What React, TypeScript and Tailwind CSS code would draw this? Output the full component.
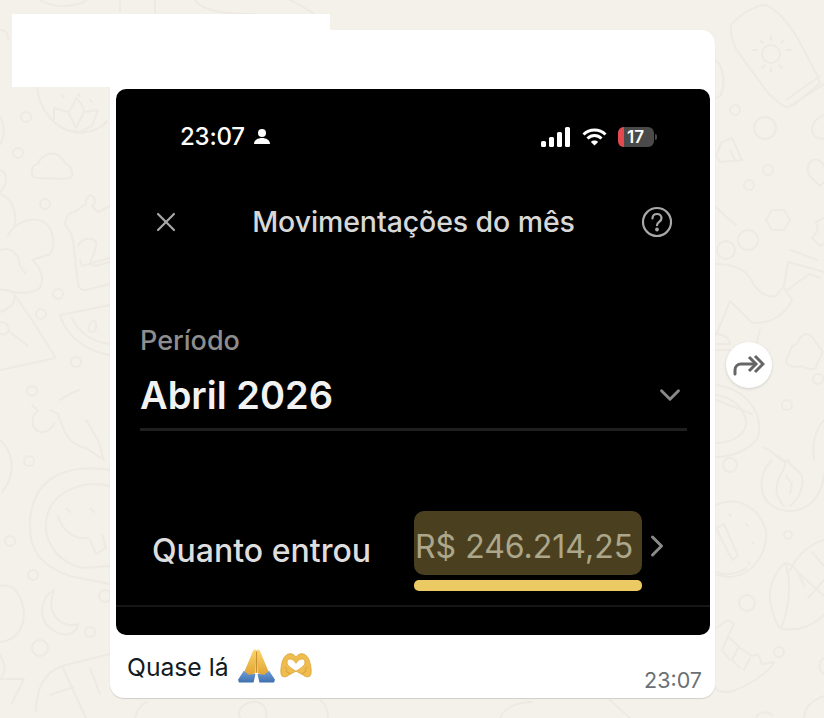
import { ChevronDown, ChevronRight, X } from "lucide-react";

const sans = "font-['Inter','Liberation_Sans',sans-serif]";

// ─── Wallpaper doodles ───────────────────────────────────────────────────────

function Doodles() {
  return (
    <svg className="absolute inset-0" width="824" height="718" viewBox="0 0 824 718" fill="none" stroke="#eeeae3" strokeWidth="2" strokeLinecap="round" strokeLinejoin="round">
      {/* sunscreen bottle, top right */}
      <path d="M731 25c8-10 22-18 32-20 10 0 24 16 34 32l20 38 3 8-26 22-8 2c-6-2-12-8-18-14L738 52c-5-8-8-18-7-27z" />
      <path d="M786 100l34-24M790 106l34-22" />
      <circle cx="771" cy="54" r="9" />
      <path d="M771 36v4M786 50h5M752 50h5M760 40l3 3M784 40l-3 3M762 68l3-3M782 68l-3-3M771 68v4" />
      <circle cx="765" cy="128" r="11" />
      <circle cx="735" cy="110" r="5" />
      <circle cx="768" cy="170" r="5" />
      <circle cx="749" cy="185" r="5" />
      <path d="M716 60c8 8 10 26 4 36l-4 2M722 142l-6 14 4 6 22-2-10-22zM730 150l6 12" />
      <path d="M824 115c-6 2-12 8-12 14 0 8 6 10 12 10M812 160c-6 6-6 14 0 18l8 8 4-4M812 160c6-2 10 2 12 6" />
      {/* hexagon, flower, sock, puzzle */}
      <path d="M772 210h12l6 10-6 10h-12l-6-10z" />
      <path d="M824 218l-8 4 2 8-6 8 8 8 4-2" />
      <circle cx="748" cy="240" r="10" />
      <circle cx="726" cy="250" r="9" />
      <path d="M736 225l-10-8-10-10M716 264c14 0 28 4 34 14 6 12 14 20 26 18l8-10 4-24 22 6 14 4M790 250l28 10" />
      <path d="M788 290l10-8 12-8 10 4M784 288l8 12M716 335l14-34 22 22c20 0 30-6 40-22M716 334c8 0 14 4 14 10l-14 0M760 330l-6 22M716 350h14" />
      <path d="M792 346c8 0 6-12 14-12s10 12 16 16c2 8-6 10-6 18-6 4-12-2-16-2-6 2-12 0-14-4 0-6 4-8 6-16z" />
      <circle cx="787" cy="405" r="5" />
      <circle cx="818" cy="379" r="5" />
      <path d="M716 385c30 4 48 28 42 52-4 8-20 20-42 20M716 395c18 2 30 16 30 28 0 10-12 20-30 20M716 400l36 14" />
      <path d="M824 420c-10 12-12 24-10 40M764 448c10 2 16 14 22 14l-8-6" />
      {/* fire, cookie, corn, hand */}
      <circle cx="730" cy="465" r="7" />
      <path d="M772 460c-14 14-14 36 0 46 14 8 30 6 40-4 8-8 12-20 12-28M784 506c-8-8-10-20-4-30 6-8 4-14 8-16 2 8 8 6 14 16 2 10-2 22-12 30M786 476l6 8-2 10" />
      <path d="M716 505c24-10 44 4 50 26 2 20-12 44-36 46l-14-2M716 572c10 4 22 2 30-4" />
      <path d="M716 528l8-4 14 32-6 4zM729 514l2 2M746 524l2 2M752 542l2 2M748 562l2 2" />
      <circle cx="788" cy="535" r="4" />
      <path d="M785 563c-12 10-18 28-14 42 2 10 6 20 10 24 18 2 30-2 43-14M785 563c6 14 6 40-4 66M786 563c8 2 14 10 18 24M824 540c-14 4-26 14-34 30M800 574l24 22M812 552l12 14M808 598l16-18" />
      <circle cx="747" cy="603" r="8" />
      <path d="M716 628l12-8 6 4-6 12 12 12 12 8 6-2 4 10 12-2c-4 10-26 24-44 30-6 0-14 0-14-4M728 636l-6 14 8 10M738 648l-6 12 8 8M750 658l-6 12" />
      <circle cx="779" cy="652" r="5" />
      <path d="M824 658c-6 4-6 12 0 16M804 718c0-10 8-18 20-22M756 718c2-6 12-8 16-2" />
      {/* lotus */}
      <path d="M37 86c2 24 18 44 40 47 12 0 24-4 30-12" />
      <path d="M54 108l14 4c4-4 8-12 8-14 4 4 8 8 8 14l14-2-6 16-12 6-14-2-12-8zM68 112l8 16 8-16" />
      <path d="M62 95l2 2M78 94l2 2M90 100l2 2" />
      <circle cx="26" cy="117" r="5" />
      <circle cx="18" cy="153" r="5" />
      {/* cloud, tree, triangle */}
      <path d="M36 178c-6 0-6-14 2-14 2-8 12-12 18-10 6 2 8 8 10 10 6 2 8 12 4 14-8 2-26 0-34 0z" />
      <path d="M0 117c6 8 4 24-2 30M0 170c8 2 8 14 0 22M0 194c12 4 18 18 14 34" />
      <circle cx="45" cy="204" r="5" />
      <path d="M8 236c6-14 24-20 36-14 10 6 12 24 6 32l-18 6c10 8 12 20 8 28-8 6-24 6-34 2l-24-2M0 250c12-4 20 6 20 16l6 8" />
      <path d="M14 294c2 8-2 14-14 18M14 294l18 26 24 38-56 12M0 322c6 0 10 4 8 10-4 4-8 2-8 2M10 332l18 14" />
      <circle cx="58" cy="294" r="5" />
      <circle cx="41" cy="314" r="5" />
      <circle cx="76" cy="362" r="5" />
      <circle cx="32" cy="391" r="5" />
      {/* cake */}
      <path d="M72 212c-6 4-8 10-6 14 6 6 8 14 8 24l4 34c2 6 4 6 8 6l24-6M74 212l6-4 6-4c-2-6 4-10 6-8 4 2 4 8 0 10l6 6 12-6" />
      <path d="M78 246c4-8 14-10 18-4 2 6-4 14-6 22 4 4 12 0 20-2M80 260l2 6 28-8" />
      {/* watermelon */}
      <path d="M60 315l50-10M60 315c6 20 24 36 50 40M72 318c6 14 20 24 38 26" />
      <path d="M94 320c-6 4-8 12-2 12 4 0 6-6 2-12z" />
      {/* chilli + smiley column */}
      <path d="M50 410l8 4 6 16c6 12 12 16 22 18l18 12-6-20-12-20M32 405l6 6c-6 4-8 16 0 20 6 4 14-2 16-8M60 400c6-4 12-8 20-10" />
      <path d="M0 440c14 12 16 36 2 52" />
      <circle cx="29" cy="461" r="5" />
      <circle cx="33" cy="575" r="5" />
      <path d="M110 470c-36-6-76 2-80 50-2 32 12 46 40 56l40 8" />
      <path d="M110 486c-32-8-62 10-64 36-2 22 14 42 38 46l26-2" />
      <path d="M58 516c4 14 16 24 30 22M66 508l4 4M90 508l4 4" />
      <path d="M90 540l6 14 10-6-4-14" />
      <circle cx="10" cy="541" r="5" />
      <path d="M0 586c12-4 22 8 24 26 0 18-8 28-24 30" />
      <path d="M54 590c-14 8-16 28-4 38 12 10 26 8 28-4-10 4-22-2-26-14-2-8 0-14 2-20z" />
      <circle cx="90" cy="632" r="5" />
      <circle cx="40" cy="648" r="8" />
      <circle cx="105" cy="596" r="6" />
      <path d="M0 655c6 10 6 18 0 24l24 0-12 24" />
      <path d="M36 712c0-26 10-40 26-46l48-12M62 666l24 52M50 695l24-8M90 668l10 26" />
      {/* slivers around the bubble */}
      <path d="M40 0c16 10 40 6 50-2M120 0v12M155 0v14M195 0c10 14 40 14 60 14M290 0c8 4 16 8 24 14" />
      <path d="M0 30c8 0 8 6 8 10M135 718c2-8 6-14 12-16M240 718c-4-8 4-16 14-16 10 0 14 8 12 16M320 700c8 6 8 14 8 18M500 718c6-12 18-16 32-16M610 700l20 18" />
    </svg>
  );
}

// ─── Inline emoji drawings ───────────────────────────────────────────────────

function PrayEmoji() {
  return (
    <svg width="37" height="36" viewBox="0 0 38 36" className="shrink-0">
      <defs>
        <linearGradient id="handA" x1="0" y1="0" x2="0" y2="1">
          <stop offset="0" stopColor="#fbd56c" />
          <stop offset="1" stopColor="#e0a030" />
        </linearGradient>
        <linearGradient id="sleeveA" x1="0" y1="0" x2="0" y2="1">
          <stop offset="0" stopColor="#6e9fd8" />
          <stop offset="1" stopColor="#3f6fae" />
        </linearGradient>
      </defs>
      <path d="M18 1c-2 0-3 2-4 5L9 18l-3 7 5 4 7-4 1-23z" fill="url(#handA)" />
      <path d="M20 1c2 0 3 2 4 5l5 12 3 7-5 4-7-4-1-23z" fill="url(#handA)" />
      <path d="M6 23L0 32l1 3h15l2-9-7 1z" fill="url(#sleeveA)" />
      <path d="M32 23l6 9-1 3H22l-2-9 7 1z" fill="url(#sleeveA)" />
      <path d="M19 3v22" stroke="#c98d2a" strokeWidth="1" />
    </svg>
  );
}

function HeartHandsEmoji() {
  return (
    <svg width="34" height="25" viewBox="0 0 36 29" className="shrink-0">
      <path
        fillRule="evenodd"
        d="M10 1c4-1 7 2 8 4 1-2 4-5 8-4 5 1 8 7 9 14 1 5 1 10-1 12-2 1-5 1-7-1l-9-5-9 5c-2 2-5 2-7 1-2-2-2-7-1-12C2 8 5 2 10 1zm1 6c-3 0-4 3-3 6 1 2 6 6 10 8 4-2 9-6 10-8 1-3 0-6-3-6-3 0-5 2-7 5-2-3-4-5-7-5z"
        fill="#efbc4e"
        stroke="#d69a2e"
        strokeWidth="0.8"
      />
      <path d="M5 16l3 4M31 16l-3 4M6 21l5 3M30 21l-5 3" stroke="#c98d2a" strokeWidth="0.8" fill="none" />
    </svg>
  );
}

// ─── Phone screenshot ────────────────────────────────────────────────────────

function StatusBar() {
  return (
    <div className="flex h-[62px] items-center justify-between pl-[64px] pr-[53px] pt-[34px]">
      <div className="flex items-center gap-[8px] text-[24px] font-medium leading-none tracking-[-0.2px] text-white">
        <span>23:07</span>
        <svg width="18" height="18" viewBox="0 0 18 18" fill="#fff">
          <circle cx="9" cy="5" r="4" />
          <path d="M1 16c0-4 4-6 8-6s8 2 8 6z" />
        </svg>
      </div>
      <div className="flex items-center gap-[11px]">
        <svg width="30" height="20" viewBox="0 0 30 20" fill="#fff">
          <rect x="0" y="14" width="5" height="6" rx="1.5" />
          <rect x="8" y="10" width="5" height="10" rx="1.5" />
          <rect x="16" y="5" width="5" height="15" rx="1.5" />
          <rect x="24" y="0" width="5" height="20" rx="1.5" />
        </svg>
        <svg width="25" height="18" viewBox="0 0 25 18" fill="none" stroke="#fff" strokeWidth="3">
          <path d="M1.5 6.5c6-6 16-6 22 0M5.5 10.5c4-4 10-4 14 0" />
          <path d="M12.5 17.5l-3.6-3.6c2-1.8 5.2-1.8 7.2 0z" fill="#fff" stroke="none" />
        </svg>
        <div className="flex items-center gap-[1px]">
          <div className="flex h-[20px] w-[36px] items-center overflow-hidden rounded-[6px] bg-[#4a4a4a]">
            <div className="h-full w-[6px] bg-[#e5484d]" />
            <span className="ml-[3px] text-[17px] font-semibold leading-none text-white">17</span>
          </div>
          <div className="h-[6px] w-[2px] rounded-r-sm bg-[#4a4a4a]" />
        </div>
      </div>
    </div>
  );
}

function PhoneShot() {
  return (
    <div className={`${sans} ml-[6px] mr-[5px] mt-[59px] flex h-[546px] flex-col overflow-hidden rounded-[10px] bg-black`}>
      <StatusBar />

      <div className="mt-[53px] flex h-[36px] items-center justify-between pl-[34px] pr-[37px]">
        <X className="h-[32px] w-[32px] text-[#a8a8a8]" strokeWidth={1.6} />
        <span className="ml-[4px] text-[28.5px] font-medium leading-none tracking-[-0.1px] text-[#d8d8d8]">Movimentações do mês</span>
        <svg width="32" height="32" viewBox="0 0 32 32" fill="none" stroke="#a8a8a8" strokeWidth="2.2" strokeLinecap="round">
          <circle cx="16" cy="16" r="14" />
          <path d="M11.5 12.5c0-3 2-4.5 4.5-4.5s4.5 1.7 4.5 4.2c0 3.6-4.5 3.6-4.5 7" />
          <circle cx="16" cy="23.5" r="0.8" fill="#a8a8a8" />
        </svg>
      </div>

      <div className="ml-[24px] mr-[23px] mt-[85px] flex flex-col">
        <span className="text-[27px] font-medium leading-[32px] text-[#8e8e8e]">Período</span>
        <div className="mt-[12px] flex h-[52px] items-center justify-between">
          <span className="text-[38px] font-semibold leading-none text-[#f2f2f2]">Abril 2026</span>
          <ChevronDown className="h-[34px] w-[34px] text-[#8a8a8a]" strokeWidth={2} />
        </div>
        <div className="mt-[7px] h-[3px] bg-[#1f1f1f]" />
      </div>

      <div className="mt-[80px] flex items-start pl-[36px]">
        <span className="mt-[20px] w-[262px] text-[32px] font-medium leading-[40px] text-[#dedede]">Quanto entrou</span>
        <div className="flex w-[228px] flex-col">
          <div className="flex h-[64px] items-center rounded-[10px] bg-[#4a4020] pl-[1px] pt-[8px] text-[32px] leading-none text-[#aca68a]">
            R$ 246.214,25
          </div>
          <div className="mt-[5px] h-[11px] rounded-[5px] bg-[#ebca63]" />
        </div>
        <ChevronRight className="ml-[-3px] mt-[17px] h-[36px] w-[36px] shrink-0 text-[#8a8a8a]" strokeWidth={2} />
      </div>

      <div className="mt-[14px] h-[2px] bg-[#161616]" />
    </div>
  );
}

// ─── Page ────────────────────────────────────────────────────────────────────

export default function App() {
  return (
    <div className="relative h-[718px] w-[824px] overflow-hidden bg-[#f4f1ea] font-['Inter','Liberation_Sans',sans-serif]">
      <Doodles />

      <div className="relative flex items-center pl-[110px] pt-[30px]">
        <div className="flex h-[668px] w-[605px] flex-col rounded-[14px] bg-white shadow-[0_1px_1px_rgba(0,0,0,0.14)]">
          <PhoneShot />

          <div className="relative flex flex-1 items-start pl-[17px] pt-[13px]">
            <span className="mt-[1px] text-[24.7px] leading-[36px] text-[#111b21]">Quase lá</span>
            <div className="ml-[9px] flex items-start gap-[4px]">
              <PrayEmoji />
              <div className="pt-[5px]">
                <HeartHandsEmoji />
              </div>
            </div>
            <span className="absolute bottom-[7px] right-[13px] text-[21.5px] leading-none text-[#6b7074]">23:07</span>
          </div>
        </div>

        <div className="ml-[11px] mt-[2px] flex h-[46px] w-[46px] items-center justify-center rounded-full bg-white shadow-[0_1px_3px_rgba(0,0,0,0.15)]">
          <svg width="32" height="24" viewBox="0 0 32 24" fill="none" stroke="#666" strokeWidth="3">
            <path d="M2 21v-4c0-4 3-6 6-6h14" strokeLinecap="round" />
            <path d="M16 4l7 7-7 7M22 3l8 8-8 8" />
          </svg>
        </div>
      </div>

      {/* redaction patch over the sender's name */}
      <div className="absolute left-[12px] top-[14px] h-[73px] w-[318px] bg-white" />
    </div>
  );
}
